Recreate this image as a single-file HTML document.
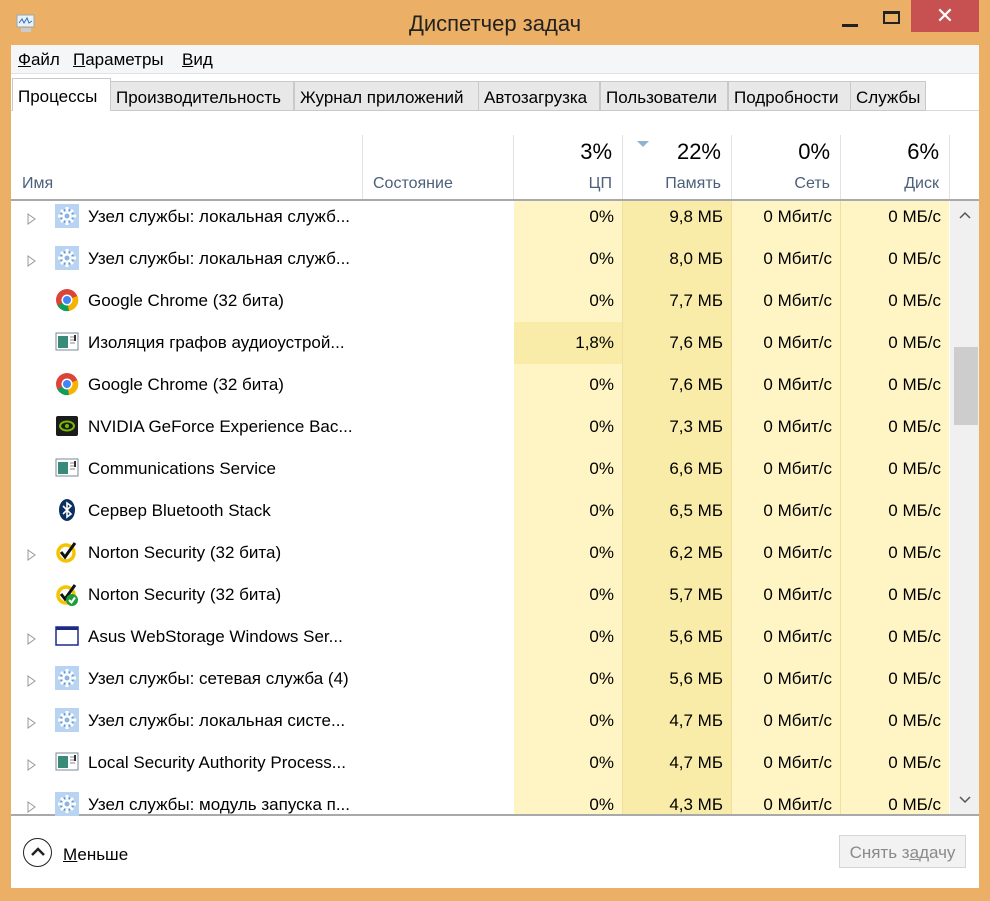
<!DOCTYPE html>
<html><head><meta charset="utf-8"><style>
*{margin:0;padding:0;box-sizing:border-box}
body{width:990px;height:901px;background:#ebb066;font-family:"Liberation Sans","DejaVu Sans",sans-serif;position:relative;overflow:hidden;color:#000}
.a{position:absolute}
.title{left:0;width:990px;top:11px;text-align:center;font-size:22px;color:#222}
.client{left:11px;top:45px;width:968px;height:843px;background:#fff}
.menu{left:11px;top:45px;width:968px;height:29px;background:#f5f6f7;border-bottom:1px solid #e3e3e3;font-size:17px}
.menu span{position:absolute;top:5px}
.tab{top:81px;height:30px;background:#e8e8e8;border:1px solid #c9c9c9;font-size:17px;padding:6px 0 0 5px;white-space:nowrap}
.hdr{font-size:16px;color:#4c607a}
.sep{width:1px;background:#e2e2e2;top:135px;height:64px}
.big{font-size:22px;color:#000;text-align:right}
.row{left:11px;width:939px;height:42px;font-size:17px}
.cell{position:absolute;top:0;height:42px;text-align:right;padding-top:12px;padding-right:8px}
.nm{position:absolute;left:77px;top:12px;white-space:nowrap}
.ic{position:absolute;left:44px;top:9px}
.ar{position:absolute;left:16px;top:15px}
</style></head><body>
<svg class="a" style="left:14px;top:13px" width="24" height="22" viewBox="0 0 24 22"><rect x="3" y="2" width="17" height="12" fill="#e8f0f8" stroke="#9aa" /><path d="M5 10 L8 6 L10 10 L13 5 L15 10 L18 8" stroke="#3070c0" fill="none"/><rect x="7" y="15" width="10" height="4" fill="#ccc"/></svg>
<div class="a title">Диспетчер задач</div>
<div class="a" style="left:842px;top:24px;width:16px;height:3px;background:#222"></div>
<div class="a" style="left:883px;top:11px;width:17px;height:13px;border:2px solid #222;border-top-width:3px"></div>
<div class="a" style="left:911px;top:0;width:68px;height:32px;background:#c75050;color:#fff;font-size:22px;text-align:center;line-height:32px">✕</div>
<div class="a client"></div>
<div class="a menu"><span style="left:7px"><u>Ф</u>айл</span><span style="left:62px"><u>П</u>араметры</span><span style="left:171px"><u>В</u>ид</span></div>
<div class="a" style="left:11px;top:110px;width:968px;height:1px;background:#d9d9d9"></div>
<div class="a tab" style="left:12px;top:78px;height:33px;width:99px;background:#fff;border-bottom:none;padding-top:8px">Процессы</div>
<div class="a tab" style="left:110px;width:184px">Производительность</div>
<div class="a tab" style="left:294px;width:185px">Журнал приложений</div>
<div class="a tab" style="left:478px;width:122px">Автозагрузка</div>
<div class="a tab" style="left:600px;width:128px">Пользователи</div>
<div class="a tab" style="left:728px;width:123px">Подробности</div>
<div class="a tab" style="left:850px;width:76px">Службы</div>

<div class="a sep" style="left:362px"></div><div class="a sep" style="left:513px"></div><div class="a sep" style="left:622px"></div><div class="a sep" style="left:731px"></div><div class="a sep" style="left:840px"></div><div class="a sep" style="left:949px"></div>
<div class="a hdr" style="left:22px;top:175px">Имя</div>
<div class="a hdr" style="left:373px;top:175px">Состояние</div>
<div class="a big" style="left:514px;width:98px;top:139px">3%</div>
<div class="a big" style="left:623px;width:98px;top:139px">22%</div>
<div class="a big" style="left:732px;width:98px;top:139px">0%</div>
<div class="a big" style="left:841px;width:98px;top:139px">6%</div>
<div class="a hdr" style="left:514px;width:98px;top:175px;text-align:right">ЦП</div>
<div class="a hdr" style="left:623px;width:98px;top:175px;text-align:right">Память</div>
<div class="a hdr" style="left:732px;width:98px;top:175px;text-align:right">Сеть</div>
<div class="a hdr" style="left:841px;width:98px;top:175px;text-align:right">Диск</div>
<svg class="a" style="left:637px;top:141px" width="12" height="7"><path d="M0 0H12L6 6Z" fill="#8fb3d0"/></svg>
<div class="a" style="left:11px;top:199px;width:968px;height:2px;background:#a9a9a9"></div>

<div class="a" style="left:514px;top:201px;width:108px;height:614px;background:#fff4c4"></div>
<div class="a" style="left:623px;top:201px;width:108px;height:614px;background:#f9eca8"></div>
<div class="a" style="left:732px;top:201px;width:108px;height:614px;background:#fff4c4"></div>
<div class="a" style="left:841px;top:201px;width:108px;height:614px;background:#fff4c4"></div>
<div class="a" style="left:514px;top:322px;width:108px;height:42px;background:#f9eca8"></div>
<div class="a" style="left:622px;top:201px;width:1px;height:614px;background:#f0e0a0"></div>
<div class="a" style="left:731px;top:201px;width:1px;height:614px;background:#f0e0a0"></div>
<div class="a" style="left:840px;top:201px;width:1px;height:614px;background:#f0e0a0"></div>
<div class="a" style="left:950px;top:201px;width:29px;height:614px;background:#f0f0f0"></div>
<div class="a" style="left:954px;top:347px;width:24px;height:78px;background:#cdcdcd"></div>
<svg class="a" style="left:959px;top:211px" width="12" height="8"><path d="M1 7L6 2L11 7" stroke="#555" stroke-width="1.5" fill="none"/></svg>
<svg class="a" style="left:959px;top:796px" width="12" height="8"><path d="M1 1L6 6L11 1" stroke="#555" stroke-width="1.5" fill="none"/></svg>
<div class="a" style="left:11px;top:814px;width:968px;height:2px;background:#a9a9a9"></div>

<div id="rows"></div>
<script>
const gear='<svg width="24" height="24"><rect width="24" height="24" fill="#b8d4f2"/><circle cx="12" cy="12" r="6" fill="#fff" stroke="#5f93d0" stroke-width="2"/><circle cx="12" cy="12" r="2.5" fill="#8ab4e4"/><path d="M12 3V7M12 17V21M3 12H7M17 12H21M6 6L8.5 8.5M15.5 15.5L18 18M18 6L15.5 8.5M8.5 15.5L6 18" stroke="#fff" stroke-width="3"/></svg>';
const chrome='<svg width="24" height="24"><circle cx="12" cy="12" r="11" fill="#db4437"/><path d="M12 12L2.5 17.5A11 11 0 0 0 14 23Z" fill="#0f9d58"/><path d="M12 12L14 23A11 11 0 0 0 22.5 8Z" fill="#f4b400"/><circle cx="12" cy="12" r="5.5" fill="#fff"/><circle cx="12" cy="12" r="4" fill="#4285f4"/></svg>';
const win='<svg width="24" height="24"><rect x="1" y="3" width="22" height="17" fill="#fff" stroke="#7a8a99"/><rect x="3" y="6" width="10" height="12" fill="#3a8a7a"/><path d="M15 7H21M15 10H21M15 13H20" stroke="#888"/><rect x="19" y="5" width="2" height="6" fill="#333"/></svg>';
const nv='<svg width="24" height="24"><rect x="1" y="2" width="22" height="20" rx="2" fill="#1b1b1b"/><ellipse cx="12" cy="12" rx="7" ry="4.5" fill="none" stroke="#76b900" stroke-width="2"/><circle cx="12" cy="12" r="2" fill="#76b900"/></svg>';
const bt='<svg width="24" height="24"><ellipse cx="12" cy="12" rx="8" ry="11" fill="#0b2f5e"/><path d="M8 8L16 16L12 19V5L16 8L8 16" stroke="#fff" stroke-width="1.6" fill="none"/></svg>';
const nor='<svg width="24" height="24"><circle cx="11" cy="13" r="8" fill="none" stroke="#f5c400" stroke-width="3.5"/><path d="M6 12L10 17L20 3" stroke="#111" stroke-width="3" fill="none"/></svg>';
const nor2='<svg width="24" height="24"><circle cx="11" cy="13" r="8" fill="none" stroke="#f5c400" stroke-width="3.5"/><path d="M6 12L10 17L20 3" stroke="#111" stroke-width="3" fill="none"/><circle cx="17" cy="18" r="6" fill="#1e9e3a"/><path d="M14 18L16.5 20.5L20 15.5" stroke="#fff" stroke-width="2" fill="none"/></svg>';
const asus='<svg width="24" height="24"><rect x="1" y="3" width="22" height="18" fill="#fff" stroke="#1c2a8a" stroke-width="1.5"/><rect x="1" y="3" width="22" height="3" fill="#1c2a8a"/></svg>';
const arrow='<svg width="10" height="12"><path d="M1 1L8 6L1 11Z" fill="none" stroke="#999"/></svg>';
const R=[
[1,gear,'Узел службы: локальная служб...','0%','9,8 МБ'],
[1,gear,'Узел службы: локальная служб...','0%','8,0 МБ'],
[0,chrome,'Google Chrome (32 бита)','0%','7,7 МБ'],
[0,win,'Изоляция графов аудиоустрой...','1,8%','7,6 МБ'],
[0,chrome,'Google Chrome (32 бита)','0%','7,6 МБ'],
[0,nv,'NVIDIA GeForce Experience Bac...','0%','7,3 МБ'],
[0,win,'Communications Service','0%','6,6 МБ'],
[0,bt,'Сервер Bluetooth Stack','0%','6,5 МБ'],
[1,nor,'Norton Security (32 бита)','0%','6,2 МБ'],
[0,nor2,'Norton Security (32 бита)','0%','5,7 МБ'],
[1,asus,'Asus WebStorage Windows Ser...','0%','5,6 МБ'],
[1,gear,'Узел службы: сетевая служба (4)','0%','5,6 МБ'],
[1,gear,'Узел службы: локальная систе...','0%','4,7 МБ'],
[1,win,'Local Security Authority Process...','0%','4,7 МБ'],
[1,gear,'Узел службы: модуль запуска п...','0%','4,3 МБ']];
let h='';
R.forEach((r,i)=>{h+=`<div class="a row" style="top:${195+42*i}px">${r[0]?'<span class="ar">'+arrow+'</span>':''}<span class="ic">${r[1]}</span><span class="nm">${r[2]}</span>
<div class="cell" style="left:503px;width:108px">${r[3]}</div><div class="cell" style="left:612px;width:108px">${r[4]}</div><div class="cell" style="left:721px;width:108px">0 Мбит/с</div><div class="cell" style="left:830px;width:108px">0 МБ/с</div></div>`});
document.getElementById('rows').innerHTML=h;
</script>
<div class="a" style="left:23px;top:838px;width:29px;height:29px;border:1.5px solid #222;border-radius:50%"></div>
<svg class="a" style="left:30px;top:846px" width="16" height="12"><path d="M2 9L8 3L14 9" stroke="#222" stroke-width="2.5" fill="none"/></svg>
<div class="a" style="left:63px;top:845px;font-size:17px"><u>М</u>еньше</div>
<div class="a" style="left:839px;top:835px;width:127px;height:33px;border:1px solid #d5d5d5;background:#f2f2f2;color:#8a8a8a;font-size:17px;text-align:center;padding-top:7px">Снять з<u>а</u>дачу</div>
</body></html>
